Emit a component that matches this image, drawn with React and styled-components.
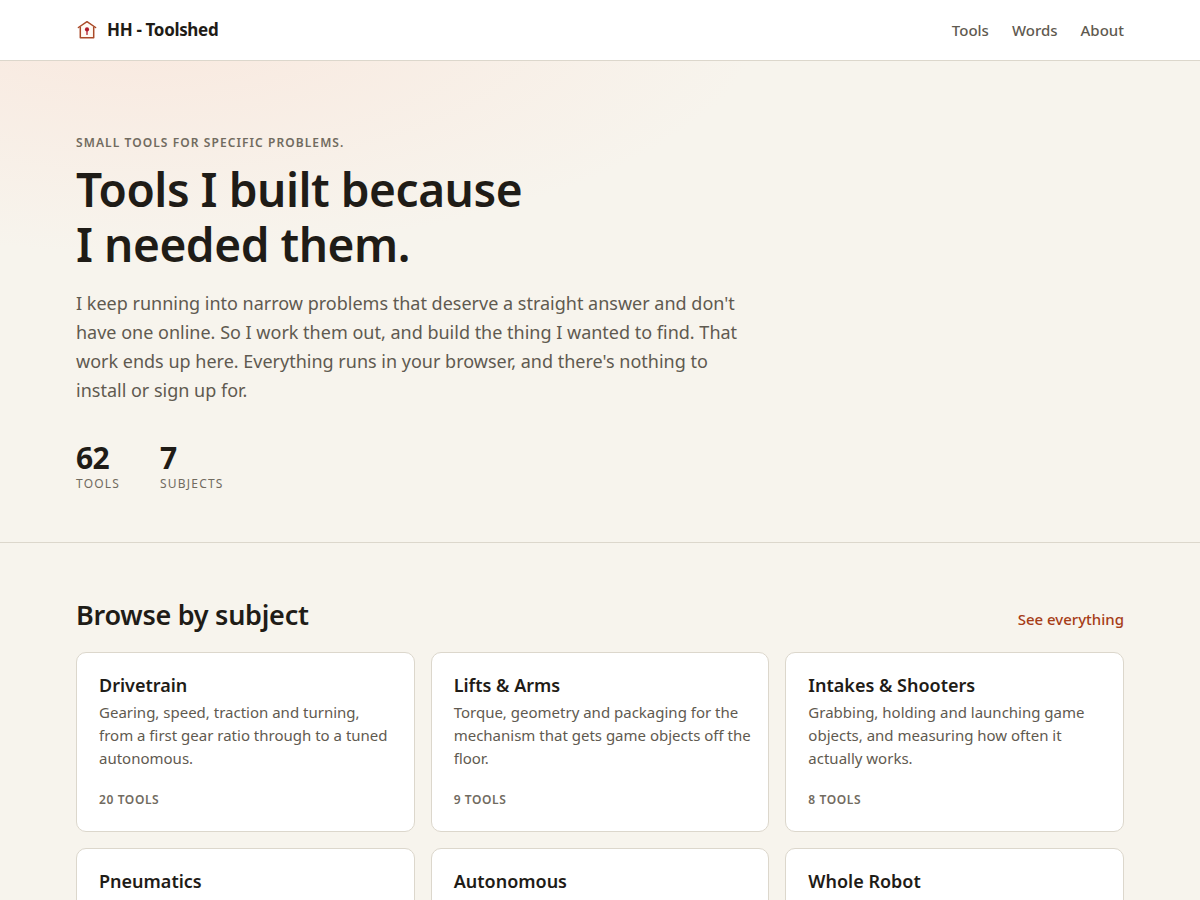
import React from "react";
import styled, { createGlobalStyle } from "styled-components";

const GlobalStyle = createGlobalStyle`
  *, *::before, *::after { box-sizing: border-box; }
  body {
    margin: 0;
    background: #f7f4ed;
    color: #1f1c17;
    font-family: "Noto Sans", sans-serif;
    font-size: 16px;
    line-height: 1.6;
  }
  h1, h2, h3, p, ul, dl, dd { margin: 0; padding: 0; }
  a { color: inherit; text-decoration: none; }
`;

const Container = styled.div`
  max-width: 1096px;
  margin: 0 auto;
  padding: 0 24px;
`;

const Header = styled.header`
  background: #ffffff;
  border-bottom: 1px solid #dcd7cc;
`;

const HeaderRow = styled(Container)`
  display: flex;
  align-items: center;
  justify-content: space-between;
  min-height: 60px;
`;

const Brand = styled.a`
  display: flex;
  align-items: center;
  gap: 9px;
  font-size: 17px;
  font-weight: 700;
  letter-spacing: -0.02em;
`;

const Nav = styled.nav`
  display: flex;
  gap: 23px;
  color: #5f5a50;
  font-size: 15px;
  font-weight: 500;
`;

const Hero = styled.section`
  padding: 72px 0 48px;
  border-bottom: 1px solid #dcd7cc;
  background: radial-gradient(620px 240px at 12% -10%, #f9e8de, #f7f4ed);
`;

const Eyebrow = styled.p`
  color: #716b5f;
  font-size: 12px;
  font-weight: 600;
  line-height: 20px;
  letter-spacing: 0.09em;
  text-transform: uppercase;
`;

const Headline = styled.h1`
  max-width: 600px;
  margin-top: 9px;
  font-size: 46px;
  font-weight: 600;
  line-height: 55px;
  letter-spacing: -0.01em;
`;

const Lead = styled.p`
  max-width: 680px;
  margin-top: 17px;
  color: #5f5a50;
  font-size: 18px;
  line-height: 29px;
`;

const Stats = styled.dl`
  display: flex;
  gap: 40px;
  margin-top: 36px;
`;

const Stat = styled.div`
  display: flex;
  flex-direction: column-reverse;
`;

const StatValue = styled.dd`
  font-size: 30px;
  font-weight: 700;
  line-height: 33px;
  letter-spacing: -0.02em;
`;

const StatLabel = styled.dt`
  color: #716b5f;
  font-size: 12px;
  line-height: 20px;
  letter-spacing: 0.1em;
  text-transform: uppercase;
`;

const Subjects = styled.section`
  padding: 52px 0 64px;
`;

const SectionHead = styled.div`
  display: flex;
  align-items: baseline;
  justify-content: space-between;
  margin-bottom: 17px;
`;

const SectionTitle = styled.h2`
  font-size: 27px;
  font-weight: 600;
  line-height: 40px;
  letter-spacing: -0.01em;
`;

const MoreLink = styled.a`
  color: #a63d17;
  font-size: 15px;
  font-weight: 500;
`;

const Grid = styled.div`
  display: grid;
  grid-template-columns: repeat(auto-fill, minmax(300px, 1fr));
  gap: 16px;
`;

const Card = styled.a`
  display: flex;
  flex-direction: column;
  padding: 20px 17px 21px 22px;
  background: #ffffff;
  border: 1px solid #dcd7cc;
  border-radius: 10px;
`;

const CardTitle = styled.h3`
  font-size: 18px;
  font-weight: 600;
  line-height: 24px;
`;

const CardText = styled.p`
  margin-top: 4px;
  color: #5f5a50;
  font-size: 15px;
  line-height: 23px;
`;

const CardCount = styled.p`
  margin-top: auto;
  padding-top: 20px;
  color: #716b5f;
  font-size: 12px;
  font-weight: 600;
  line-height: 20px;
  letter-spacing: 0.05em;
  text-transform: uppercase;
`;

const SUBJECTS = [
  { title: "Drivetrain", count: 20, text: "Gearing, speed, traction and turning, from a first gear ratio through to a tuned autonomous." },
  { title: "Lifts & Arms", count: 9, text: "Torque, geometry and packaging for the mechanism that gets game objects off the floor." },
  { title: "Intakes & Shooters", count: 8, text: "Grabbing, holding and launching game objects, and measuring how often it actually works." },
  { title: "Pneumatics", count: 5, text: "Air budget, cylinder force and tank sizing." },
  { title: "Autonomous", count: 8, text: "Paths, sensors and control loops." },
  { title: "Whole Robot", count: 7, text: "Weight, power and planning across the machine." },
];

function ShedIcon() {
  return (
    <svg width="22" height="22" viewBox="0 0 22 22" fill="none" aria-hidden="true">
      <path d="M4 7.6 11 2.9l7 4.7v11H4z" fill="#fffaf3" />
      <path d="M2.4 8.5 11 2.7l8.6 5.8" stroke="#aa4a28" strokeWidth="1.5" strokeLinecap="round" strokeLinejoin="round" />
      <path d="M4.3 7.8v10.9h13.4V7.8" stroke="#aa4a28" strokeWidth="1.5" strokeLinejoin="round" />
      <circle cx="11" cy="10.4" r="2.1" fill="#b01c2c" />
      <path d="M11 11v4.4" stroke="#b01c2c" strokeWidth="1.3" strokeLinecap="round" />
    </svg>
  );
}

export default function App() {
  return (
    <>
      <GlobalStyle />
      <Header>
        <HeaderRow>
          <Brand href="#home">
            <ShedIcon />
            HH - Toolshed
          </Brand>
          <Nav aria-label="Main">
            <a href="#tools">Tools</a>
            <a href="#words">Words</a>
            <a href="#about">About</a>
          </Nav>
        </HeaderRow>
      </Header>
      <main>
        <Hero>
          <Container>
            <Eyebrow>Small tools for specific problems.</Eyebrow>
            <Headline>
              Tools I built because
              <br />I needed them.
            </Headline>
            <Lead>
              I keep running into narrow problems that deserve a straight answer and don't have one
              online. So I work them out, and build the thing I wanted to find. That work ends up
              here. Everything runs in your browser, and there's nothing to install or sign up for.
            </Lead>
            <Stats>
              <Stat>
                <StatLabel>Tools</StatLabel>
                <StatValue>62</StatValue>
              </Stat>
              <Stat>
                <StatLabel>Subjects</StatLabel>
                <StatValue>7</StatValue>
              </Stat>
            </Stats>
          </Container>
        </Hero>
        <Subjects id="tools">
          <Container>
            <SectionHead>
              <SectionTitle>Browse by subject</SectionTitle>
              <MoreLink href="#all">See everything</MoreLink>
            </SectionHead>
            <Grid>
              {SUBJECTS.map((s) => (
                <Card key={s.title} href={"#" + s.title.toLowerCase().replace(/[^a-z]+/g, "-")}>
                  <CardTitle>{s.title}</CardTitle>
                  <CardText>{s.text}</CardText>
                  <CardCount>{s.count} tools</CardCount>
                </Card>
              ))}
            </Grid>
          </Container>
        </Subjects>
      </main>
    </>
  );
}
